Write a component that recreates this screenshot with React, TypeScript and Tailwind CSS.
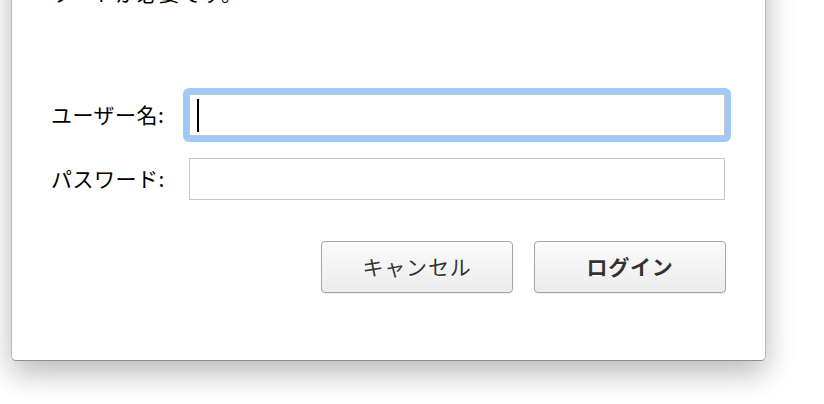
const font = { fontFamily: '"Noto Sans CJK JP", "Noto Sans", sans-serif' };

export default function App() {
  return (
    <div className="h-[404px] w-[824px] overflow-hidden bg-white" style={font}>
      <div className="ml-[11px] -mt-[70px] w-[755px] rounded-[5px] border border-[#b8b8b8] border-b-[#8f8f8f] bg-white pl-[39px] pr-[39px] pt-[16px] pb-[67px] shadow-[0_12px_30px_rgba(0,0,0,0.28)]">
        <p className="text-[21px] leading-[30px] tracking-[0.5px] text-black">
          このサーバーにアクセスするには、ユーザー名とパス
          <br />
          ワードが必要です。
        </p>

        <div className="mt-[87px] flex flex-col gap-[22px] pr-[1px]">
          <div className="flex items-center">
            <label className="w-[138px] text-[21px] tracking-[0.5px] text-black">ユーザー名:</label>
            <div className="relative flex-1">
              <div className="absolute -inset-[6px] rounded-[6px] bg-[#9fcaf8]" />
              <input
                readOnly
                className="relative block h-[42px] w-full border border-[#c6c6c6] bg-white outline-none"
              />
              <span className="absolute left-[8px] top-[5px] h-[33px] w-[2px] bg-black" />
            </div>
          </div>
          <div className="flex items-center">
            <label className="w-[138px] text-[21px] tracking-[0.5px] text-black">パスワード:</label>
            <input
              type="password"
              readOnly
              className="block h-[42px] flex-1 border border-[#c6c6c6] bg-white outline-none"
            />
          </div>
        </div>

        <div className="mt-[41px] flex justify-end gap-[21px]">
          <button className="h-[52px] w-[192px] rounded-[4px] border border-[#a6a6a6] bg-gradient-to-b from-[#fbfbfb] to-[#ececec] text-[21px] tracking-[0.8px] text-[#333] shadow-[0_1px_1px_rgba(0,0,0,0.08)] [text-shadow:0_1px_0_#fff]">
            キャンセル
          </button>
          <button className="h-[52px] w-[192px] rounded-[4px] border border-[#a6a6a6] bg-gradient-to-b from-[#fbfbfb] to-[#ececec] text-[21px] font-bold tracking-[0.8px] text-[#333] shadow-[0_1px_1px_rgba(0,0,0,0.08)] [text-shadow:0_1px_0_#fff]">
            ログイン
          </button>
        </div>
      </div>
    </div>
  );
}
